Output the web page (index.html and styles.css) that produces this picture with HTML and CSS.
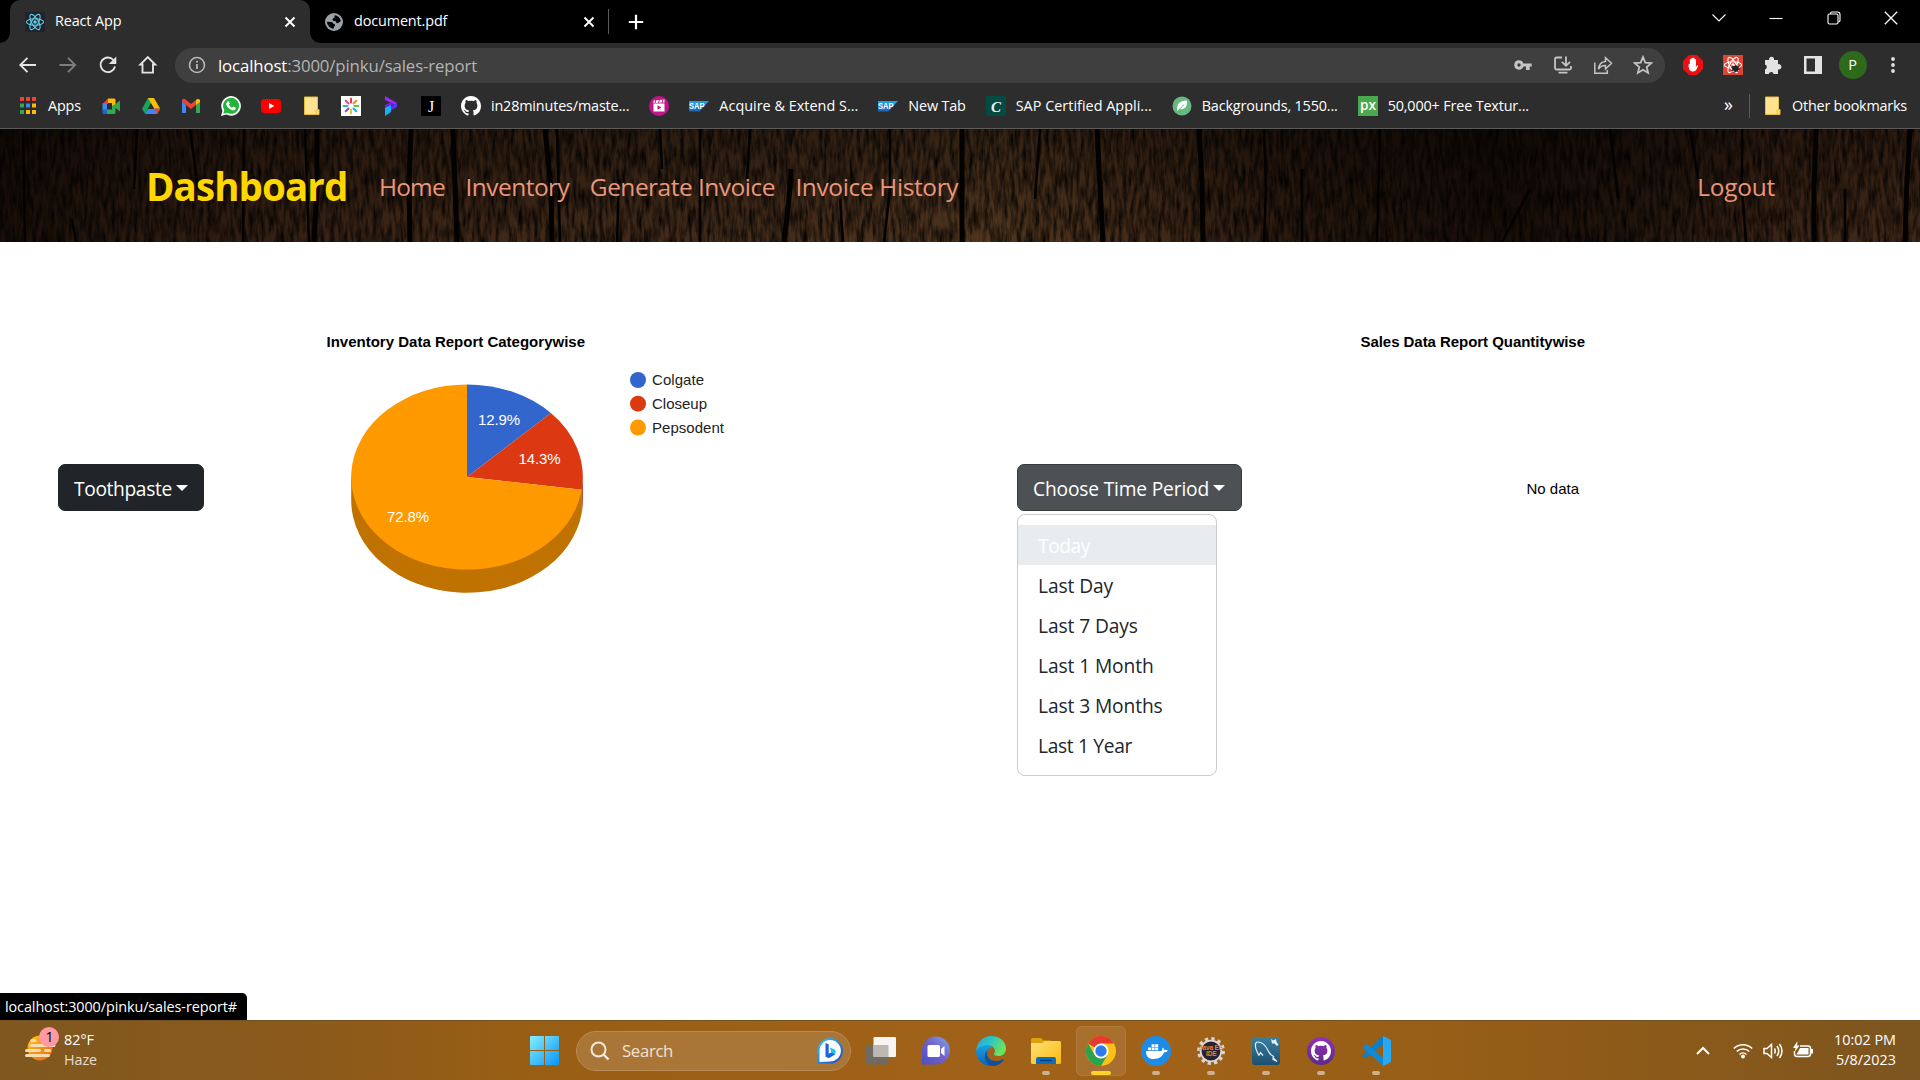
FILE: index.html
```html
<!DOCTYPE html>
<html lang="en">
<head>
<meta charset="utf-8">
<title>React App</title>
<link rel="stylesheet" href="styles.css">
</head>
<body>
<svg class="defs" width="0" height="0" aria-hidden="true">
  <defs>
    <linearGradient id="gStart" x1="0" y1="0" x2="1" y2="1"><stop offset="0" stop-color="#84efff"/><stop offset="1" stop-color="#0a94f5"/></linearGradient>
    <linearGradient id="gBing" x1="0" y1="0" x2="1" y2="1"><stop offset="0" stop-color="#2fc6f5"/><stop offset="1" stop-color="#1b48c4"/></linearGradient>
    <linearGradient id="gTeams" x1="0" y1="1" x2="1" y2="0"><stop offset="0" stop-color="#4b4fc4"/><stop offset=".5" stop-color="#7060c6"/><stop offset="1" stop-color="#7ba7ee"/></linearGradient>
    <linearGradient id="gEdge" x1="0" y1="0" x2="1" y2=".4"><stop offset="0" stop-color="#1aa4e2"/><stop offset=".55" stop-color="#31c8c0"/><stop offset="1" stop-color="#6be35a"/></linearGradient>
    <linearGradient id="gEdge2" x1="0" y1="0" x2="0" y2="1"><stop offset="0" stop-color="#1aa0e4"/><stop offset="1" stop-color="#0b62b8"/></linearGradient>
    <linearGradient id="gFolder" x1="0" y1="0" x2="1" y2="1"><stop offset="0" stop-color="#ffe27a"/><stop offset="1" stop-color="#fbb90d"/></linearGradient>
    <linearGradient id="gSql" x1="0" y1="0" x2="0" y2="1"><stop offset="0" stop-color="#3a7fa3"/><stop offset="1" stop-color="#1c4f6e"/></linearGradient>
    <linearGradient id="gGit" x1="0" y1="0" x2="0" y2="1"><stop offset="0" stop-color="#9431b4"/><stop offset="1" stop-color="#5b2a8c"/></linearGradient>
    <linearGradient id="gSun" x1="0" y1="0" x2="1" y2="1"><stop offset="0" stop-color="#ffc71c"/><stop offset="1" stop-color="#ee5f10"/></linearGradient>
    <linearGradient id="gSap" x1="0" y1="0" x2="0" y2="1"><stop offset="0" stop-color="#1fa6ea"/><stop offset="1" stop-color="#1a62b8"/></linearGradient>
    <symbol id="cat" viewBox="0 0 16 16"><path d="M8 0C3.58 0 0 3.58 0 8c0 3.54 2.29 6.53 5.47 7.59.4.07.55-.17.55-.38 0-.19-.01-.82-.01-1.49-2.01.37-2.53-.49-2.69-.94-.09-.23-.48-.94-.82-1.13-.28-.15-.68-.52-.01-.53.63-.01 1.08.58 1.23.82.72 1.21 1.87.87 2.33.66.07-.52.28-.87.51-1.07-1.78-.2-3.64-.89-3.64-3.95 0-.87.31-1.59.82-2.15-.08-.2-.36-1.02.08-2.12 0 0 .67-.21 2.2.82.64-.18 1.32-.27 2-.27s1.36.09 2 .27c1.53-1.04 2.2-.82 2.2-.82.44 1.1.16 1.92.08 2.12.51.56.82 1.27.82 2.15 0 3.07-1.87 3.75-3.65 3.95.29.25.54.73.54 1.48 0 1.07-.01 1.93-.01 2.2 0 .21.15.46.55.38A8.01 8.01 0 0 0 16 8c0-4.42-3.58-8-8-8z"/></symbol>
    <symbol id="atom" viewBox="0 0 20 20"><g fill="none" stroke="currentColor" stroke-width="1.1"><ellipse cx="10" cy="10" rx="8.6" ry="3.3"/><ellipse cx="10" cy="10" rx="8.6" ry="3.3" transform="rotate(60 10 10)"/><ellipse cx="10" cy="10" rx="8.6" ry="3.3" transform="rotate(120 10 10)"/></g><circle cx="10" cy="10" r="1.7" fill="currentColor"/></symbol>
    <symbol id="note" viewBox="0 0 20 20"><path d="M3.5 1h13v12.5h1.5v5H3.5z" fill="#ffe391"/><path d="M3.5 1h13v12.5h1.5v5H3.5zM15 18.500v-4.500h2" fill="none" stroke="#e8bd3c"/></symbol>
    <symbol id="sap" viewBox="0 0 20 20"><path d="M0 5h20L10.500 15.500H0z" fill="url(#gSap)"/><text x="0" y="13.200" font-family="Liberation Sans, sans-serif" font-size="8.500" font-weight="700" textLength="15.500" lengthAdjust="spacingAndGlyphs" fill="#fff">SAP</text></symbol>
    <symbol id="x" viewBox="0 0 12 12"><path d="M1.500 1.500l9 9M10.500 1.500l-9 9" stroke="currentColor" stroke-width="1.900" fill="none"/></symbol>
  </defs>
</svg>

<header class="browser">
  <div class="tabstrip">
    <div class="tab tab-active">
      <svg class="i20 favreact" viewBox="0 0 20 20"><use href="#atom"/></svg>
      <span class="tab-title">React App</span>
      <svg class="i12"><use href="#x"/></svg>
    </div>
    <div class="tab tab-idle">
      <svg class="i20" viewBox="0 0 20 20"><circle cx="10" cy="10" r="9" fill="#9aa0a6"/><path d="M10.500 3.200c3.200.4 5.800 2.600 6.300 5.800-1.600 1-2 2.300-3.500 2.300-1.400 0-.8-2-2.300-2.200-1.300-.2-2.700-.4-2.400-1.900.2-1.100 2-1 2-2.100zM3 9.800l4.400.2c1.200.1 1.300 1.600 2.500 1.900 1.400.3 1.500 1.300.8 2.200-.8.800-.9 1.500-1.200 2.600C6 16.400 3.200 13.600 3 9.800z" fill="#000"/></svg>
      <span class="tab-title">document.pdf</span>
      <svg class="i12"><use href="#x"/></svg>
    </div>
    <svg class="newtab" viewBox="0 0 16 16"><path d="M8 .8v14.400M.8 8h14.400" stroke="#fff" stroke-width="2.200"/></svg>
    <div class="winctl">
      <svg viewBox="0 0 14 14"><path d="M.5 3.500l6.500 6.500 6.500-6.500"/></svg>
      <svg viewBox="0 0 14 14"><path d="M.5 7.500h13"/></svg>
      <svg viewBox="0 0 14 14"><rect x="1" y="3" width="10" height="10" rx="1.500"/><path d="M3.500 3V2.500Q3.500 1 5 1h5.500Q13 1 13 3.500v6q0 1-1.500 1.500"/></svg>
      <svg viewBox="0 0 14 14"><path d="M.8.8l12.400 12.400M13.200.8L.8 13.200" stroke-width="1.300"/></svg>
    </div>
  </div>

  <div class="toolbar">
    <div class="navbtns">
      <svg viewBox="0 0 20 20"><path d="M18 10H2.500M9.500 2.800L2.300 10l7.200 7.200" class="ln"/></svg>
      <svg class="dim" viewBox="0 0 20 20"><path d="M1.500 10h15.500M10 2.800l7.200 7.200-7.200 7.200" class="ln"/></svg>
      <svg viewBox="0 0 20 20"><path d="M17 11.500A7.300 7.300 0 1 1 15.400 5" class="ln"/><path d="M18.300 1.500v7.500h-7.500z" fill="#e3e3e3"/></svg>
      <svg viewBox="0 0 20 20"><path d="M4.500 17.600h10.500V9.500h2.200L9.750 2 2.300 9.500h2.200z" class="ln"/></svg>
    </div>
    <div class="omnibox">
      <svg class="i18" viewBox="0 0 18 18"><circle cx="9" cy="9" r="7.500" fill="none" stroke="#b5b8bb" stroke-width="1.600"/><path d="M9 8v5M9 4.800v1.800" stroke="#b5b8bb" stroke-width="1.800"/></svg>
      <span class="url"><b>localhost</b>:3000/pinku/sales-report</span>
      <div class="omni-actions">
        <svg viewBox="0 0 20 20"><path fill-rule="evenodd" d="M6 5.300a4.700 4.700 0 1 0 4.400 6.300H13V15h3.700v-3.400h2V8.400h-8.300A4.700 4.700 0 0 0 6 5.300zm0 3a1.700 1.700 0 1 1 0 3.400 1.700 1.700 0 0 1 0-3.400z" fill="#c4c4c4"/></svg>
        <svg viewBox="0 0 20 20"><path d="M9 2.500H3.500Q2 2.500 2 4v9q0 1.500 1.500 1.500h13Q18 14.500 18 13v-2M13 1.500v9M9 6.800l4 4 4-4M5.500 17.600h9" class="g"/></svg>
        <svg viewBox="0 0 20 20"><path d="M1.800 7.500v10.700h12.500V15M5.500 14c.5-5 3.500-7.300 7-7.600V2.700l6 5.600-6 5.700v-3.500c-3 0-5.300 1-7 3.500z" class="g g-thin"/></svg>
        <svg viewBox="0 0 20 20"><path d="M10 2l2.300 5.600 6 .5-4.600 3.900 1.400 5.900L10 14.700l-5.100 3.200L6.300 12 1.700 8.100l6-.5z" class="g"/></svg>
      </div>
    </div>
    <div class="extensions">
      <svg viewBox="0 0 20 20"><path d="M6 0h8l6 6v8l-6 6H6l-6-6V6z" fill="#ee1010"/><path d="M5.500 9.500q.8-.8 1.300 0V4.500q.7-1 1.500 0V3.200q.7-1 1.500 0v-.3q.8-.9 1.600 0v1.600q.8-.9 1.500 0V12q1-2.300 2.300-1.700c-1 3-2 6.200-5 6.200-3.600 0-4.500-2-4.700-7z" fill="#fff"/></svg>
      <svg viewBox="0 0 20 20"><rect width="20" height="20" fill="#dd4436"/><g color="#fff"><use href="#atom"/></g><path d="M8.500 11q1.500-1 2.500.5l2-1.500 2 1.500 2-1-1.500 2.500 2 1.500-2.500.5.500 2.500-2-1.500-2 2-.5-2.500-3 1 1.500-2.500-1.500-1.500 1.500-.5z" fill="#222"/></svg>
      <svg viewBox="0 0 20 20"><path d="M2 5h4.200a2.500 2.500 0 1 1 4.800 0H15v4.200a2.700 2.700 0 1 1 0 5.200V19h-4.300a2.500 2.500 0 0 0-4.900 0H2v-4.400a2.600 2.600 0 0 0 0-5z" fill="#e3e3e3"/></svg>
      <svg viewBox="0 0 20 20"><path fill-rule="evenodd" d="M1 1h18v18H1zM3.500 3.500v13H12v-13z" fill="#e3e3e3"/></svg>
      <span class="avatar">P</span>
      <svg viewBox="0 0 20 20"><g fill="#e3e3e3"><circle cx="10" cy="4" r="1.900"/><circle cx="10" cy="10" r="1.900"/><circle cx="10" cy="16" r="1.900"/></g></svg>
    </div>
  </div>

  <div class="bookmarks">
    <div class="bm"><svg viewBox="0 0 20 20"><g fill="#ea4335"><path d="M2 1h4v4H2zM8 1h4v4H8zM14 1h4v4h-4z"/></g><path d="M2 7.500h4v4H2zM2 14h4v4H2z" fill="#34a853"/><path d="M8 7.500h4v4H8z" fill="#4285f4"/><path d="M14 7.500h4v4h-4zM8 14h4v4H8zM14 14h4v4h-4z" fill="#fbbc05"/></svg><span>Apps</span></div>
    <div class="bm"><svg viewBox="0 0 20 20"><path d="M1.500 8L7 2.500V8z" fill="#ea4335"/><path d="M7 2.500h6q1.500 0 1.500 1.500v4.500L11 11V7H7z" fill="#fbbc05"/><path d="M1.500 7.500H6V14H1.500z" fill="#4285f4"/><path d="M1.500 13.500H6v4.500H3q-1.500 0-1.500-1.500z" fill="#1967d2"/><path d="M6 13.500h5V10l3.500-2L19 4.500v11l-4.500-3.500v4.500q0 1.500-1.500 1.500H6z" fill="#34a853"/></svg></div>
    <div class="bm"><svg viewBox="0 0 20 20"><path d="M7 2h6L4 18l-3-5.200z" fill="#14a65b"/><path d="M7 2h6l6.200 10.800h-6z" fill="#fbbc05"/><path d="M7.200 12.800h12L16 18H4z" fill="#4285f4"/><path d="M13.200 12.800h6L16 18z" fill="#ea4335"/><path d="M10 7.500l3 5.300H7z" fill="#2d2d2d"/></svg></div>
    <div class="bm"><svg viewBox="0 0 20 20"><path d="M1 5v12h4V9z" fill="#4285f4"/><path d="M19 5v12h-4V9z" fill="#34a853"/><path d="M1 5.500V4q1.500-2 3.500-.5L10 8l5.500-4.500L15 9l-5 4-5-4z" fill="#ea4335"/><path d="M15 9V4q2-2 4 0v2z" fill="#fbbc05"/></svg></div>
    <div class="bm"><svg viewBox="0 0 20 20"><path d="M0 20l1.500-5.300A9.800 9.800 0 1 1 5.500 18.600z" fill="#fff"/><path d="M2.300 17.700l1-3.600a8 8 0 1 1 2.900 2.700z" fill="#23b33a"/><path d="M6.500 5.500q1-.8 1.600.2l.7 1.700-.9 1.400q1.100 2.100 3.200 3l1.300-1.200 2.100 1q.7.800-.3 2-2 1.700-5-.3-3.300-2-4-4.500-.3-2 1.300-3.300z" fill="#fff"/></svg></div>
    <div class="bm"><svg viewBox="0 0 20 20"><rect x="0" y="3" width="20" height="14" rx="3.500" fill="#f00"/><path d="M8 7l5.300 3L8 13z" fill="#fff"/></svg></div>
    <div class="bm"><svg viewBox="0 0 20 20"><use href="#note"/></svg></div>
    <div class="bm"><svg viewBox="0 0 20 20"><rect width="20" height="20" fill="#fff"/><g fill="none" stroke-width="2" stroke-linecap="round"><path d="M10 2.500v4" stroke="#e6394a"/><path d="M15.300 4.700l-2.800 2.800" stroke="#f08a24"/><path d="M17.500 10h-4" stroke="#6abf4b"/><path d="M15.300 15.300l-2.800-2.800" stroke="#29a9e0"/><path d="M10 17.500v-4" stroke="#eac321"/><path d="M4.700 15.300l2.800-2.800" stroke="#9c4ab8"/><path d="M2.500 10h4" stroke="#30b9ad"/><path d="M4.700 4.700l2.800 2.800" stroke="#e14b8c"/></g></svg></div>
    <div class="bm"><svg viewBox="0 0 20 20"><path d="M4 0l12 7v3L4 4z" fill="#9b2df0"/><path d="M16 7v4l-7 4v-4z" fill="#5b2df5"/><path d="M4 9l6-3 3 2-9 5z" fill="#6a22ea"/><path d="M4 12l6-3v7l-6 4z" fill="#12b1f3"/></svg></div>
    <div class="bm"><svg viewBox="0 0 20 20"><rect width="20" height="20" rx="1" fill="#000"/><text x="10" y="15.500" text-anchor="middle" font-family="Liberation Serif, serif" font-size="16" fill="#fff">J</text></svg></div>
    <div class="bm"><svg viewBox="0 0 16 16" fill="#fff"><use href="#cat"/></svg><span>in28minutes/maste...</span></div>
    <div class="bm"><svg viewBox="0 0 20 20"><circle cx="10" cy="10" r="10" fill="#c1158c"/><rect x="4.500" y="7.500" width="11" height="8" fill="#fff"/><path d="M4.500 4.500l11-1v3l-11 .5z" fill="#fff"/><path d="M7 3.500L6 7M10.500 3.500L9.500 7M14 3.500L13 7" stroke="#c1158c"/><path d="M8.500 9.300l4 2.200-4 2.200z" fill="#c1158c"/></svg></div>
    <div class="bm loose"><svg viewBox="0 0 20 20"><use href="#sap"/></svg><span>Acquire &amp; Extend S...</span></div>
    <div class="bm"><svg viewBox="0 0 20 20"><use href="#sap"/></svg><span>New Tab</span></div>
    <div class="bm loose"><svg viewBox="0 0 20 20"><rect width="20" height="20" rx="2" fill="#064a44"/><text x="10" y="15.500" text-anchor="middle" font-family="Liberation Serif, serif" font-style="italic" font-weight="700" font-size="15" fill="#e9f3f0">C</text></svg><span>SAP Certified Appli...</span></div>
    <div class="bm"><svg viewBox="0 0 20 20"><circle cx="10" cy="10" r="9.500" fill="#67b983"/><path d="M5.500 15.500C4 7 8 5 15 4.500c.5 6-2 9.500-7.500 8.500z" fill="#fff"/><path d="M5.500 15.500L12 8.500" stroke="#67b983"/></svg><span>Backgrounds, 1550...</span></div>
    <div class="bm"><svg class="px" viewBox="0 0 20 20"><rect width="20" height="20" fill="#4aa84e"/><text x="2" y="13.500" font-family="Open Sans, sans-serif" font-size="14" textLength="16" lengthAdjust="spacingAndGlyphs" font-weight="600" fill="#fff">px</text></svg><span>50,000+ Free Textur...</span></div>
    <span class="more">»</span>
    <div class="bm other"><svg viewBox="0 0 20 20"><use href="#note"/></svg><span>Other bookmarks</span></div>
  </div>
</header>

<nav class="wood">
  <svg class="grain" viewBox="0 0 1920 113" preserveAspectRatio="none">
    <defs>
      <filter id="fGrain" x="0" y="0" width="100%" height="100%" color-interpolation-filters="sRGB">
        <feTurbulence type="fractalNoise" baseFrequency=".26 .05" numOctaves="3" seed="7"/>
        <feColorMatrix values="0 0 0 0 0  0 0 0 0 0  0 0 0 0 0  1.700 0 0 0 -.550"/>
      </filter>
      <linearGradient id="gWood">
        <stop offset="0" stop-color="#1a0f08"/><stop offset=".07" stop-color="#2a190f"/><stop offset=".2" stop-color="#3d2616"/><stop offset=".4" stop-color="#452d1b"/><stop offset=".52" stop-color="#51361f"/><stop offset=".6" stop-color="#432a18"/><stop offset=".67" stop-color="#2b1a0f"/><stop offset=".78" stop-color="#180e08"/><stop offset=".87" stop-color="#291910"/><stop offset=".92" stop-color="#3c2416"/><stop offset="1" stop-color="#432a19"/>
      </linearGradient>
      <linearGradient id="gShade" x2="0" y2="1"><stop offset="0" stop-color="#000" stop-opacity=".35"/><stop offset="1" stop-color="#000" stop-opacity="0"/></linearGradient>
    </defs>
    <rect width="1920" height="113" fill="url(#gWood)"/>
    <rect width="1920" height="113" filter="url(#fGrain)"/>
    <rect width="1920" height="113" fill="url(#gShade)"/>
    <g fill="none" stroke="#040201">
      <path stroke-width="5" d="M317 0v60l-3 53M411 0l-2 55 1 58M453 0l4 113M545 0l6 60 1 53M791 40l-2 30-5 43M962 0v113M1097 0l6 113M1199 0l3 55 1 58M1816 0l-2 60v53M1910 0l-3 50-2 63"/>
      <path stroke-width="2.500" d="M23 0l2 113M137 0l-3 60M244 0l-1 113M190 0l8 60M305 0l4 113M557 0l3 113M619 50l-2 63M890 0v60l-6 53M840 70l3 43M1040 0l-5 70M1264 0l2 60-2 53M1302 40v73M1380 0l-3 113M1530 60l-28 53M1610 0l8 70M1742 0v60l4 53M1690 0l8 50M1845 60v53M660 0l2 40M700 0v113M750 0l-3 50M72 90l4 23"/>
    </g>
  </svg>
  <div class="nav-inner">
    <span class="brand">Dashboard</span>
    <a class="home">Home</a>
    <a class="inventory">Inventory</a>
    <a class="generate">Generate Invoice</a>
    <a class="history">Invoice History</a>
    <a class="logout">Logout</a>
  </div>
</nav>

<main class="report">
  <button class="btn"><span>Toothpaste</span></button>
  <svg class="chart" viewBox="204 321 813 333" width="813" height="333">
    <text class="ctitle" x="326.500" y="347" textLength="258.500">Inventory Data Report Categorywise</text>
    <path d="M351.200 477v23.200A115.800 92.600 0 0 0 581.700 512.900V489.700z" fill="#bf7200"/>
    <path d="M582.800 477v23.200q0 6-1.100 12.700V489.700z" fill="#a6290d"/>
    <path d="M467 477V384.400A115.800 92.600 0 0 1 550.900 413.100z" fill="#36c"/>
    <path d="M467 477L550.900 413.100A115.800 92.600 0 0 1 581.700 489.700z" fill="#dc3912"/>
    <path d="M467 477L581.700 489.700A115.800 92.600 0 1 1 467 384.400z" fill="#f90"/>
    <g class="clabel" fill="#fff">
      <text x="478" y="425" textLength="42">12.9%</text>
      <text x="518.500" y="464" textLength="42">14.3%</text>
      <text x="387" y="522" textLength="42">72.8%</text>
    </g>
    <circle cx="638" cy="380" r="8" fill="#36c"/><circle cx="638" cy="403.700" r="8" fill="#dc3912"/><circle cx="638" cy="427.500" r="8" fill="#f90"/>
    <g class="clabel" fill="#222">
      <text x="652" y="385" textLength="52">Colgate</text>
      <text x="652" y="409" textLength="55">Closeup</text>
      <text x="652" y="433" textLength="72">Pepsodent</text>
    </g>
  </svg>
  <div class="dropdown">
    <button class="btn btn-on"><span>Choose Time Period</span></button>
    <ul class="menu">
      <li class="hot">Today</li>
      <li>Last Day</li>
      <li>Last 7 Days</li>
      <li>Last 1 Month</li>
      <li>Last 3 Months</li>
      <li class="year">Last 1 Year</li>
    </ul>
  </div>
  <svg class="chart" viewBox="1242 321 678 333" width="678" height="333">
    <text class="ctitle" x="1360.500" y="347" textLength="224.500">Sales Data Report Quantitywise</text>
    <text class="clabel" x="1526.500" y="494" textLength="52.500">No data</text>
  </svg>
  <div class="status">localhost:3000/pinku/sales-report#</div>
</main>

<footer class="taskbar">
  <div class="weather">
    <svg width="36" height="36" viewBox="0 0 36 36"><circle cx="17" cy="22" r="12.500" fill="url(#gSun)"/><g stroke="#f6ddb0" stroke-width="3" stroke-linecap="round"><path d="M9 14.500h3M8 19.500h23M3.500 24.500h13M22.500 24.500h4M3.500 29.500h22"/></g><circle cx="26" cy="11" r="10" fill="#ff99a4"/><text x="26.500" y="16" text-anchor="middle" font-family="Open Sans, sans-serif" font-size="14">1</text></svg>
    <div class="wtext"><span>82°F</span><span class="soft">Haze</span></div>
  </div>
  <div class="dock">
    <svg class="start" viewBox="0 0 29 29"><path d="M0 1q0-1 1-1h13v14H0zM15 0h13q1 0 1 1v13H15zM0 15h14v14H1q-1 0-1-1zM15 15h14v13q0 1-1 1H15z" fill="url(#gStart)"/></svg>
    <div class="search">
      <svg width="20" height="20" viewBox="0 0 20 20"><circle cx="8.500" cy="8.500" r="7" fill="none" stroke="#f3e9dc" stroke-width="2"/><path d="M13.500 13.500l5 5" stroke="#f3e9dc" stroke-width="2.400"/></svg>
      <span>Search</span>
      <svg class="bing" width="26" height="26" viewBox="0 0 26 26"><path d="M1.500 25V13A11.700 11.700 0 1 1 13 24.500z" fill="#fff" stroke="url(#gBing)" stroke-width="2"/><path d="M8.500 5l3.200 1.200v9.600l6.300-3v3.800l-6.300 3.700-3.200-1.900z" fill="#1c63dc"/><path d="M13 9.500l5 2.300q1.500 2.500 0 4.800l-3.800-2z" fill="#1fc3e8"/></svg>
    </div>
    <div class="apps">
      <span class="app"><svg viewBox="0 0 30 30"><rect x="0" y="9" width="22.500" height="19.500" rx="1" fill="#6f6a64"/><rect x="7.500" y="1" width="22.500" height="20" rx="1" fill="#f7f5f2"/><path d="M7.500 9h15v12h-15z" fill="#bdb8b1"/></svg></span>
      <span class="app"><svg viewBox="0 0 30 30"><path d="M1 28.500V15A14 14 0 1 1 15 28.500z" fill="url(#gTeams)"/><rect x="6.500" y="9" width="12.500" height="12" rx="1.500" fill="#fff"/><path d="M20 13l3.500-3v10L20 17z" fill="#fff"/></svg></span>
      <span class="app"><svg viewBox="0 0 30 30"><path d="M0 15C1 6 7 0 15.500 0 24 0 30 6 30 12.500c0 5-3.500 7.500-7.500 7.500-3 0-4.500-1-4.500-2 0-.8 1-1.300 1-3 0-3-2.500-5.500-6.500-5.500C7 9.500 2.500 12 0 15z" fill="url(#gEdge)"/><path d="M0 15c2-3.500 7-6.300 12.500-5.500 1.500.2 3 .8 4 1.700-3 .3-5.500 2.500-5.500 6.300 0 5 4 10.500 9 11C12 32.500 0 27 0 15z" fill="url(#gEdge2)"/><path d="M11.500 14.500C9 20 13.500 25 20 25c3 0 5-.8 6.700-1.800.6-.3 1.100.2.800.8C25 28 20.500 30 16 30 9 28.500 6.500 18 11.500 14.500z" fill="#104f99"/></svg></span>
      <span class="app run"><svg viewBox="0 0 30 30"><path d="M0 3.500Q0 2 1.500 2H10l2.500 2.500H20V10H0z" fill="#dfa00a"/><path d="M0 7h11l2.500-2H28.500Q30 5 30 6.500v20q0 1.500-1.500 1.500h-27Q0 28 0 26.500z" fill="url(#gFolder)"/><path d="M5 28v-5q0-2 2-2h16q2 0 2 2v5z" fill="#0f6cbf"/><path d="M9 24.500h12" stroke="#063f7e" stroke-width="1.300"/></svg></span>
      <span class="app run on"><svg viewBox="0 0 30 30"><circle cx="15" cy="15" r="15" fill="#fbc116"/><path d="M15 15L2 7.500A15 15 0 0 1 28 7.500H15z" fill="#e33b2e"/><path d="M2 7.500A15 15 0 0 0 15 30l6.500-11.250L8.500 18.750z" fill="#2ba24c"/><circle cx="15" cy="15" r="7.500" fill="#fff"/><circle cx="15" cy="15" r="5.700" fill="#2f7bea"/></svg></span>
      <span class="app run"><svg viewBox="0 0 30 30"><circle cx="15" cy="15" r="15" fill="#1d8ce6"/><path d="M5 15h15.500q1.200-1 .8-3 1-.8 2 2 2.500-.5 3.500.8-1.500 1.700-3.600 1.500C21.500 20.500 18 23 12.500 23 7.500 23 5 20.500 5 15zM7 11.500h3v2.800H7zM10.600 11.500h3v2.800h-3zM14.200 11.500h3v2.800h-3zM10.600 8.300h3V11h-3zM14.200 8.300h3V11h-3z" fill="#fff"/></svg></span>
      <span class="app run"><svg viewBox="0 0 30 30"><circle cx="15" cy="15" r="12.200" fill="none" stroke="#d9d6d4" stroke-width="3.500" stroke-dasharray="3.200 3.190"/><circle cx="15" cy="15" r="10.300" fill="#2a2233" stroke="#d9d6d4" stroke-width="1.800"/><g font-family="Liberation Sans, sans-serif" font-weight="700" font-size="6.500" fill="#f58220"><text x="3" y="13.500" textLength="24">Java EE</text><text x="10" y="20" textLength="10.500">IDE</text></g></svg></span>
      <span class="app run"><svg viewBox="0 0 30 30"><rect x="1" y="1" width="28" height="28" rx="3" fill="url(#gSql)"/><path d="M8 19.500C3 11 4 6 6.500 6c5 0 8.500 4 10.500 8.500 1 3 2.500 4 5.500 6-1 .8-.5 1.300 3.500 5-2.500-2-4-1.500-4.500-3M8 19.500l1.500-3 2.500 3" fill="none" stroke="#e6f0f5" stroke-width="1.200"/><path d="M20 3l2.500 1.500L25 3l.5 3 2 2.500-1.500 1.500-2.500-2.500-2.500 0z" fill="#e6f0f5"/></svg></span>
      <span class="app run"><svg viewBox="0 0 30 30"><circle cx="15" cy="15" r="14" fill="url(#gGit)"/><svg x="5" y="5" width="20" height="20" fill="#fff"><use href="#cat"/></svg></svg></span>
      <span class="app run"><svg viewBox="0 0 30 30"><path d="M22 0L2.500 18q-1.300 1 0 2.200l1.400 1.200q1 .8 2 0L22 8.500z" fill="#0a80c9"/><path d="M22 30L2.500 12q-1.300-1 0-2.200l1.400-1.200q1-.8 2 0L22 21.500z" fill="#0f8ad6"/><path d="M22 0l6.800 3.200q1.200.6 1.200 2v19.600q0 1.400-1.200 2L22 30z" fill="#2ba8f2"/></svg></span>
    </div>
  </div>
  <div class="tray">
    <svg width="14" height="20" viewBox="0 0 14 20"><path d="M1 13l6-6 6 6" class="tr tr-bold"/></svg>
    <svg width="20" height="20" viewBox="0 0 20 20"><path d="M.8 7.500a13 13 0 0 1 18.400 0M3.700 10.500a9 9 0 0 1 12.600 0M6.500 13.500a5 5 0 0 1 7 0" class="tr"/><circle cx="10" cy="15.500" r="2" fill="#fff"/></svg>
    <svg width="20" height="20" viewBox="0 0 20 20"><path d="M1 7.500h3L8.500 3.500v13L4 12.500H1zM11.500 7.500q1.500 2.500 0 5M14 5q3.500 5 0 10M16.500 3q5 7 0 14" class="tr"/></svg>
    <svg width="20" height="20" viewBox="0 0 20 20"><path d="M7 5h8q2.500 0 2.500 2.500v5Q17.500 15.500 15 15.500H4Q1.500 15.500 1.500 13v-3" class="tr"/><path d="M7 7h8.500v6.500H3.500l2-3.500zM18 8h2v4.500h-2zM4.500 0L0 7h2.500L2 10.500 6.500 4.500H4z" fill="#fff"/></svg>
    <div class="clock"><span>10:02 PM</span><span>5/8/2023</span></div>
  </div>
</footer>
</body>
</html>
```
FILE: styles.css
```css
* { box-sizing: border-box; }
body {
  margin: 0;
  width: 1920px;
  height: 1080px;
  overflow: hidden;
  display: flex;
  flex-direction: column;
  background: #fff;
  font-family: "Open Sans", "Noto Sans", sans-serif;
  font-size: 14.4px;
}
svg { flex: none; display: block; }
span, a { white-space: nowrap; }
.defs { position: absolute; }
.i20 { width: 20px; height: 20px; }
.i18 { width: 18px; height: 18px; }
.i12 { width: 12px; height: 12px; }

/* browser chrome */
.browser { height: 129px; background: #2d2d2d; color: #fff; border-bottom: 1px solid #5b5b5b; }
.tabstrip { height: 43px; background: #000; display: flex; align-items: center; padding-left: 10px; }
.tab { height: 43px; display: flex; align-items: center; gap: 10px; }
.tab-active { width: 300px; padding: 0 14px 0 15px; background: #2d2d2d; border-radius: 10px 10px 0 0; position: relative; }
.tab-active::before, .tab-active::after {
  content: ""; position: absolute; bottom: 0; width: 10px; height: 10px;
  background: radial-gradient(circle at 0 0, #000 9.5px, #2d2d2d 10px);
}
.tab-active::before { left: -10px; }
.tab-active::after { right: -10px; background: radial-gradient(circle at 100% 0, #000 9.5px, #2d2d2d 10px); }
.tab-idle { width: 299px; height: 25px; padding: 0 13px 0 14px; border-right: 1px solid #5a5a5a; }
.tab-title { flex: 1; letter-spacing: -.12px; margin-top: -2px; }
.favreact { background: #20232a; color: #5fd0ee; }
.newtab { width: 16px; height: 16px; margin-left: 19px; }
.winctl { margin: -7px 22px 0 auto; display: flex; gap: 43.500px; }
.winctl svg { width: 14px; height: 14px; fill: none; stroke: #fff; stroke-width: 1.1; }
.toolbar { height: 44px; display: flex; align-items: center; }
.navbtns { width: 175px; padding-left: 18px; display: flex; gap: 20px; }
.navbtns svg { width: 20px; height: 20px; }
.ln { fill: none; stroke: #e3e3e3; stroke-width: 1.9; }
.dim .ln { stroke: #7d7d7d; }
.omnibox { width: 1490px; height: 35px; border-radius: 18px; background: #3f3f3f; display: flex; align-items: center; padding: 0 12px 0 13px; }
.url { font-size: 16.8px; letter-spacing: -.126px; margin-left: 12px; color: #b4b4b4; }
.url b { font-weight: 400; color: #fff; }
.omni-actions { margin-left: auto; display: flex; gap: 20px; }
.omni-actions svg { width: 20px; height: 20px; }
.g { fill: none; stroke: #c4c4c4; stroke-width: 1.8; }
.g-thin { stroke-width: 1.5; }
.extensions { display: flex; align-items: center; gap: 20px; padding-left: 17.500px; }
.extensions svg { width: 20px; height: 20px; }
.avatar { width: 28px; height: 28px; margin: 0 -4px; border-radius: 50%; background: #2f691c; text-align: center; line-height: 28px; font-size: 14.500px; }
.bookmarks { height: 41px; padding: 0 13px 3px 18px; display: flex; align-items: center; gap: 20px; }
.bm { display: flex; align-items: center; gap: 10px; }
.bm svg { width: 20px; height: 20px; }
.bm span { letter-spacing: -.16px; margin-top: -2px; }
.loose span { letter-spacing: .02px; }
.px { overflow: visible; }
.more { margin-left: auto; font-size: 18px; line-height: 20px; margin-top: -5px; }
.other { border-left: 1px solid #5a5a5a; padding-left: 12px; margin-left: -4px; height: 24px; }
.other span { letter-spacing: -.21px; }

/* app navigation */
.wood { height: 113px; display: grid; }
.grain { grid-area: 1 / 1; width: 1920px; height: 113px; }
.nav-inner { grid-area: 1 / 1; z-index: 1; display: flex; padding: 0 145px 0 146px; color: #e9967a; font-size: 24.500px; line-height: 115px; gap: 20.500px; }
.brand { color: gold; font-size: 38.500px; letter-spacing: -.9px; font-weight: 700; line-height: 115px; margin-right: 11px; }
.home { letter-spacing: -.82px; }
.inventory { letter-spacing: -.52px; }
.generate { letter-spacing: -.52px; }
.history { letter-spacing: -.38px; }
.logout { letter-spacing: -.25px; margin-left: auto; }

/* report */
.report { height: 778px; display: flex; align-items: flex-start; padding: 79px 0 0 58px; position: relative; }
.btn { width: 146px; height: 47px; margin-top: 143px; padding: 2px 0 0 15px; border: 1px solid #212529; border-radius: 7px; background: #212529; color: #fff; font: 19.200px "Open Sans", sans-serif; letter-spacing: -.36px; display: flex; align-items: center; }
.btn::after { content: ""; margin: -2px 0 0 4px; border: 6px solid transparent; border-top-color: #fff; border-bottom: 0; }
.btn-on { width: 225px; letter-spacing: -.17px; background: #4d5154; border-color: #373b3e; }
.dropdown { width: 225px; position: relative; }
.menu { position: absolute; left: 0; top: 193px; width: 200px; height: 262px; margin: 0; padding: 10px 0; list-style: none; border: 1px solid #ccc; border-radius: 8px; background: #fff; color: #212529; font-size: 19.200px; letter-spacing: -.1px; }
.menu li { height: 40px; line-height: 42px; padding-left: 20px; }
.menu .hot { background: #e9ecef; color: #fff; letter-spacing: -.42px; }
.menu .year { letter-spacing: -.33px; }
.ctitle { font: 700 15px "Liberation Sans", sans-serif; }
.clabel { font: 15px "Liberation Sans", sans-serif; }
.status { position: absolute; left: 0; bottom: 0; width: 247px; height: 27px; padding-left: 5px; line-height: 27px; letter-spacing: -.087px; background: #000; color: #fff; border-radius: 0 5px 0 0; }

/* taskbar */
.taskbar { height: 60px; display: grid; grid-template-columns: 530px 1fr auto; color: #fff; background: linear-gradient(90deg, #7f571f, #8b5a1b 16%, #985e14 27%, #a06218 50%, #a06218 62%, #945d17 78%, #83571c 94%, #7c5520); border-top: 1px solid #74511f; }
.weather { display: flex; padding: 5px 0 0 23px; gap: 5px; }
.wtext { display: flex; flex-direction: column; line-height: 20px; padding-top: 4px; }
.soft { color: #e6dccd; letter-spacing: -.1px; }
.dock { display: flex; align-items: center; }
.start { width: 29px; height: 29px; }
.search { width: 275px; height: 40px; margin-left: 17px; border-radius: 20px; border: 1px solid #b98a53; background: #aa7638; display: flex; align-items: center; padding: 0 7px 0 13px; color: #f0e2d0; font-size: 16.800px; letter-spacing: -.35px; gap: 12px; }
.search span { margin-top: -1px; }
.bing { margin-left: auto; }
.apps { display: flex; margin-left: 2.500px; }
.app { width: 55px; height: 50px; display: flex; justify-content: center; padding-top: 10px; position: relative; }
.app svg { width: 30px; height: 30px; }
.app svg svg { width: 20px; height: 20px; }
.run::after { content: ""; position: absolute; bottom: 1px; width: 8px; height: 4px; border-radius: 2px; background: #cdb08d; }
.on { width: 50px; margin: 0 2.500px; background: #a86f2d; border-radius: 6px; box-shadow: inset 0 0 0 1px #b07a3d; }
.on::after { width: 20px; background: #ffd32d; }
.tray { display: flex; align-items: center; padding-right: 24px; }
.tray svg { margin-right: 10px; }
.tray svg:first-child { margin-right: 23px; }
.tr { fill: none; stroke: #fff; stroke-width: 1.5; }
.tr-bold { stroke-width: 2; }
.clock { display: flex; flex-direction: column; align-items: flex-end; line-height: 20px; margin: -2px 0 0 11px; }
```
